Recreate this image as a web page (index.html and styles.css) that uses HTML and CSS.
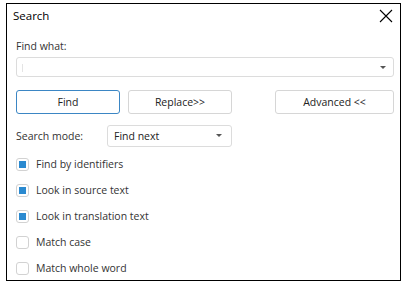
FILE: index.html
```html
<!DOCTYPE html>
<html lang="en">
<head>
    <meta charset="UTF-8">
    <title>Search</title>
    <link rel="stylesheet" href="styles.css">
</head>
<body>
    <div class="dialog">
        <div class="title-bar">
            <span class="title">Search</span>
            <svg class="close" width="14" height="14" viewBox="0 0 14 14">
                <path d="M1 1 L13 13 M13 1 L1 13" stroke="#000" stroke-width="1.1" fill="none"/>
            </svg>
        </div>
        <div class="content">
            <div class="label">Find what:</div>
            <div class="combo">
                <span class="caret"></span>
                <span class="arrow"></span>
            </div>
            <div class="buttons">
                <div class="btn btn-find">Find</div>
                <div class="btn btn-replace">Replace&gt;&gt;</div>
                <div class="btn btn-advanced">Advanced &lt;&lt;</div>
            </div>
            <div class="mode">
                <span class="mode-label">Search mode:</span>
                <div class="select">
                    <span>Find next</span>
                    <span class="arrow"></span>
                </div>
            </div>
            <div class="checks">
                <div class="check"><span class="box checked"></span>Find by identifiers</div>
                <div class="check"><span class="box checked"></span>Look in source text</div>
                <div class="check"><span class="box checked"></span>Look in translation text</div>
                <div class="check"><span class="box"></span>Match case</div>
                <div class="check"><span class="box"></span>Match whole word</div>
            </div>
        </div>
    </div>
</body>
</html>
```

FILE: styles.css
```css
* {
    margin: 0;
    padding: 0;
    box-sizing: border-box;
}

body {
    font-family: "Open Sans", "Noto Sans", sans-serif;
    font-size: 10.5px;
    color: #333;
    background: #fff;
}

/* Dialog frame */
.dialog {
    margin: 3px 0 0 6px;
    width: 395px;
    height: 278px;
    border: 1px solid #000;
    background: #fff;
}

.title-bar {
    display: flex;
    justify-content: space-between;
    align-items: center;
    height: 23px;
    padding: 0 7px 0 6px;
}

.title {
    font-size: 11.5px;
    color: #000;
}

.close {
    display: block;
}

.content {
    padding: 12px 6px 0 9px;
}

.label {
    height: 18px;
    line-height: 14px;
}

/* Combo box */
.combo {
    position: relative;
    height: 20px;
    border: 1px solid #dcdcdc;
    border-radius: 3px;
}

.caret {
    position: absolute;
    left: 5px;
    top: 6px;
    width: 1px;
    height: 8px;
    background: #e4e4e4;
}

.arrow {
    position: absolute;
    right: 7px;
    top: 8px;
    width: 0;
    height: 0;
    border-left: 3px solid transparent;
    border-right: 3px solid transparent;
    border-top: 3px solid #555;
}

/* Buttons */
.buttons {
    display: flex;
    margin-top: 13px;
}

.btn {
    height: 24px;
    line-height: 22px;
    text-align: center;
    border: 1px solid #d6d6d6;
    border-radius: 3px;
    color: #222;
}

.btn-find {
    width: 104px;
    border-color: #3b86c4;
}

.btn-replace {
    width: 104px;
    margin-left: 8px;
}

.btn-advanced {
    width: 119px;
    margin-left: auto;
}

/* Search mode */
.mode {
    display: flex;
    align-items: center;
    margin-top: 11px;
}

.mode-label {
    width: 91px;
}

.select {
    position: relative;
    width: 125px;
    height: 22px;
    line-height: 20px;
    padding-left: 6px;
    border: 1px solid #dcdcdc;
    border-radius: 3px;
    color: #222;
}

.select .arrow {
    right: 9px;
}

/* Checkboxes */
.checks {
    margin-top: 4px;
}

.check {
    display: flex;
    align-items: center;
    height: 26px;
}

.box {
    width: 13px;
    height: 13px;
    margin-right: 7px;
    border: 1px solid #d2d2d2;
    border-radius: 3px;
    display: flex;
    align-items: center;
    justify-content: center;
}

.box.checked::after {
    content: "";
    width: 7px;
    height: 7px;
    background: #2b8ad0;
}
```
